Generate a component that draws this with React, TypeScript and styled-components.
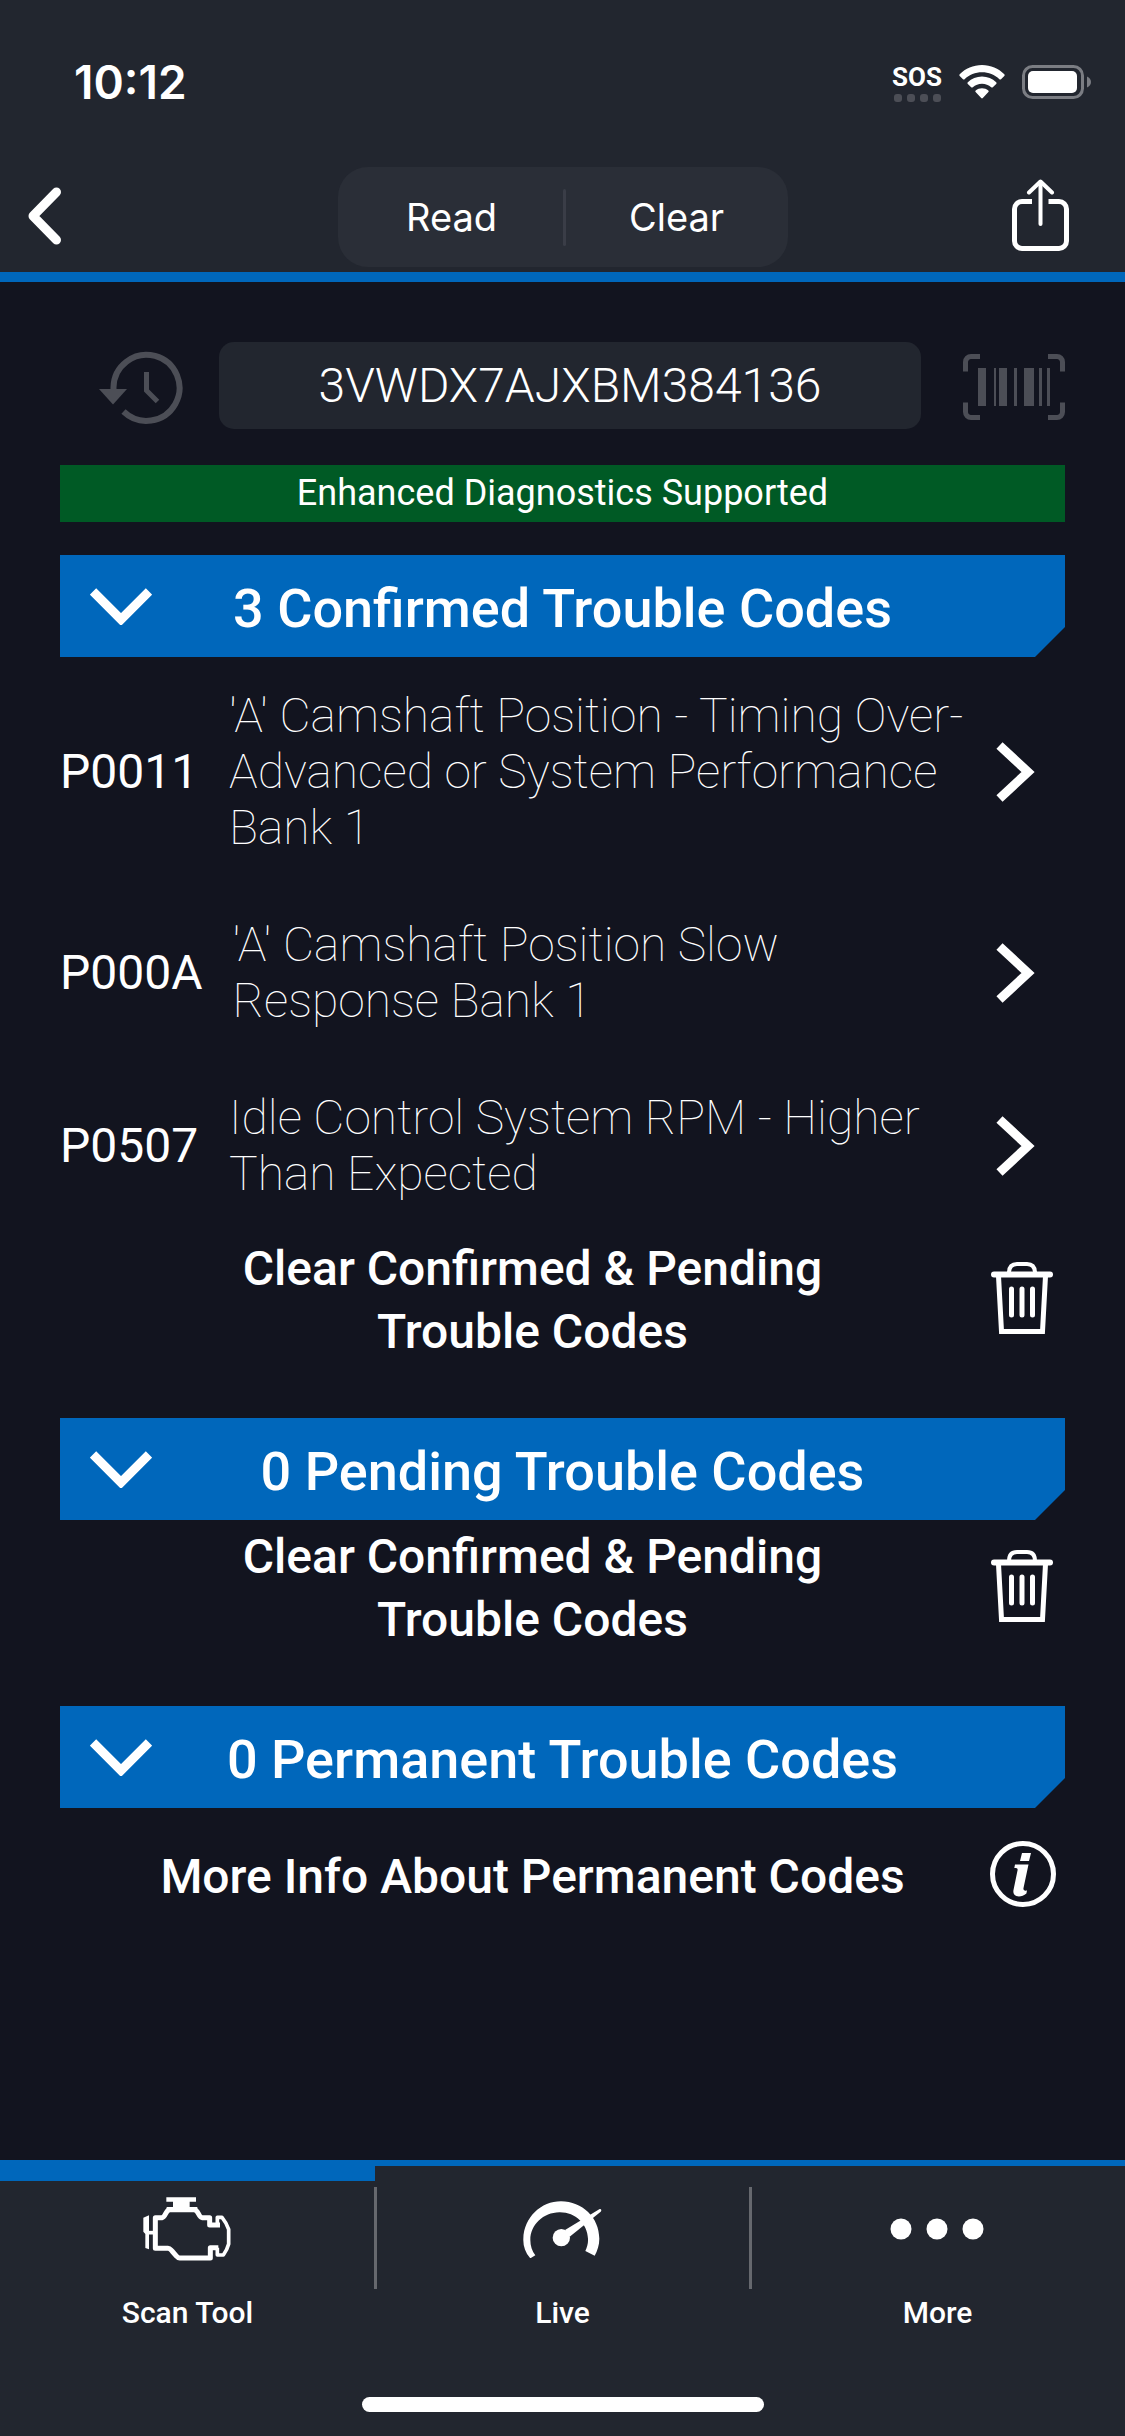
import React, { useState } from "react";
import styled, { createGlobalStyle } from "styled-components";

const color = {
  page: "#12141f",
  bar: "#22262f",
  raised: "#2a2e37",
  blue: "#0067bb",
  green: "#005a25",
  muted: "#4c4e56",
  divider: "#66686e",
};

const GlobalStyle = createGlobalStyle`
  *, *::before, *::after { box-sizing: border-box; }
  body {
    margin: 0;
    background: ${color.page};
    color: #fff;
    font-family: Roboto, "Liberation Sans", sans-serif;
  }
  button, input {
    font: inherit;
    color: inherit;
    border: 0;
    margin: 0;
    padding: 0;
    background: none;
  }
  button { cursor: pointer; }
  a { color: inherit; text-decoration: none; }
  svg { display: block; flex: none; }
  h2, p, ul { margin: 0; padding: 0; list-style: none; }
`;

const Screen = styled.div`
  min-height: 100vh;
  display: flex;
  flex-direction: column;
`;

const TopBar = styled.header`
  background: ${color.bar};
  border-bottom: 10px solid ${color.blue};
`;

const StatusBar = styled.div`
  display: flex;
  justify-content: space-between;
  align-items: center;
  height: 162px;
  padding: 2px 34px 0 74px;
`;

const Time = styled.span`
  font: 600 46px/60px Inter, "Liberation Sans", sans-serif;
`;

const StatusIcons = styled.div`
  display: flex;
  align-items: center;
  gap: 17px;
`;

const Carrier = styled.div`
  display: grid;
  justify-items: center;
  gap: 3px;
  font: 700 26px/28px Roboto, "Liberation Sans", sans-serif;
`;

const Dots = styled.div`
  display: flex;
  gap: 5px;
`;

const Dot = styled.i`
  width: 8px;
  height: 8px;
  border-radius: 3px;
  background: ${color.muted};
`;

const NavBar = styled.nav`
  display: grid;
  grid-template-columns: 1fr auto 1fr;
  align-items: center;
  height: 110px;
`;

const BackButton = styled.button`
  justify-self: start;
  padding-left: 28px;
`;

const ShareButton = styled.button`
  justify-self: end;
  padding-right: 56px;
`;

const Segments = styled.div`
  display: flex;
  align-items: center;
  height: 100px;
  padding-left: 3px;
  border-radius: 30px;
  background: ${color.raised};
`;

const Segment = styled.button`
  width: 222px;
  height: 100px;
  font: 400 38px/48px Inter, "Liberation Sans", sans-serif;
`;

const SegmentDivider = styled.span`
  width: 3px;
  height: 57px;
  border-radius: 2px;
  background: #3a3d47;
`;

const Content = styled.main`
  flex: 1;
  padding: 60px 60px 0;
`;

const VinRow = styled.div`
  display: flex;
  align-items: center;
  gap: 36px;
`;

const HistoryButton = styled.button`
  padding-left: 39px;
`;

const ScanButton = styled.button`
  padding: 2px 0 0 6px;
`;

const VinInput = styled.input`
  flex: 1;
  min-width: 0;
  height: 87px;
  border-radius: 15px;
  background: ${color.bar};
  font-size: 48px;
  font-weight: 300;
  text-align: center;
`;

const Supported = styled.p`
  margin: 36px 0 33px;
  background: ${color.green};
  font-size: 36px;
  line-height: 57px;
  text-align: center;
`;

const Section = styled.section`
  & + & { margin-top: 54px; }
`;

const SectionToggle = styled.button`
  display: grid;
  grid-template-columns: 122px 1fr 122px;
  align-items: center;
  justify-items: center;
  width: 100%;
  height: 102px;
  background: ${color.blue};
  clip-path: polygon(0 0, 100% 0, 100% 72px, calc(100% - 30px) 100%, 0 100%);
`;

const SectionTitle = styled.span`
  padding-top: 4px;
  font-size: 54px;
  font-weight: 500;
  line-height: 63px;
`;

const CodeRow = styled.a`
  display: flex;
  align-items: center;
  gap: 30px;
  padding: 31px 30px 30px 0;
  font-size: 48px;
  line-height: 56px;
`;

const Code = styled.span`
  min-width: 139px;
`;

const Description = styled.span`
  flex: 1;
  font-weight: 100;
`;

const ActionRow = styled.button`
  display: grid;
  grid-template-columns: 1fr 84px;
  align-items: center;
  justify-items: center;
  width: 100%;
  min-height: 132px;
  padding-left: 24px;
`;

const ActionLabel = styled.span`
  padding-top: 4px;
  font-size: 48px;
  font-weight: 500;
  line-height: 63px;
`;

const TabBar = styled.footer`
  border-top: 6px solid ${color.blue};
  background: ${color.bar};
`;

const Tabs = styled.nav`
  display: grid;
  grid-template-columns: repeat(3, 1fr);
`;

const Tab = styled.a<{ $active?: boolean }>`
  display: flex;
  flex-direction: column;
  align-items: center;
  border-top: 15px solid ${(p) => (p.$active ? color.blue : "transparent")};
  font-size: 30px;
  font-weight: 500;
  line-height: 36px;
`;

const TabIcon = styled.span<{ $divided?: boolean }>`
  display: grid;
  place-items: center;
  align-self: stretch;
  height: 102px;
  margin: 6px -2px 6px 0;
  padding-bottom: 18px;
  border-right: 3px solid ${(p) => (p.$divided ? color.divider : "transparent")};
`;

const HomeIndicator = styled.div`
  width: 402px;
  height: 15px;
  margin: 66px auto 24px;
  border-radius: 8px;
  background: #fff;
`;

const WifiIcon = () => (
  <svg width="46" height="34" viewBox="0 0 46 34" fill="#fff" aria-hidden="true">
    <path d="M23 0C31.800 0 39.500 3.500 45.300 9.200c.5.500.5 1.200 0 1.700L42 14.200c-.4.500-1.100.5-1.600 0C35.700 9.800 29.700 7.300 23 7.300S10.300 9.800 5.600 14.200c-.5.500-1.200.5-1.600 0L.7 10.900c-.5-.5-.5-1.200 0-1.700C6.500 3.500 14.200 0 23 0z" />
    <path d="M23 11.600c5.500 0 10.400 2.100 14.200 5.600.5.500.5 1.200 0 1.700l-3.400 3.400c-.4.400-1.100.4-1.600 0-2.500-2.200-5.700-3.500-9.200-3.500s-6.700 1.300-9.200 3.500c-.5.400-1.200.4-1.600 0l-3.400-3.400c-.5-.5-.5-1.200 0-1.700 3.800-3.500 8.700-5.600 14.200-5.600z" />
    <path d="M23 23.200c2.400 0 4.600.8 6.300 2.200.5.500.5 1.200.1 1.700l-5.600 5.900c-.5.500-1.100.5-1.600 0l-5.600-5.900c-.4-.5-.4-1.200.1-1.700 1.700-1.400 3.900-2.200 6.300-2.200z" />
  </svg>
);

const BatteryIcon = () => (
  <svg width="69" height="34" viewBox="0 0 69 34" aria-hidden="true">
    <rect x="1.500" y="1.500" width="59" height="31" rx="9" fill="none" stroke="#7b7d83" strokeWidth="3" />
    <rect x="6" y="6" width="49" height="22" rx="5" fill="#fff" />
    <path d="M65 11.500c2.500 1 4 3 4 5.500s-1.500 4.500-4 5.500z" fill="#7b7d83" />
  </svg>
);

const BackIcon = () => (
  <svg width="34" height="60" viewBox="0 0 34 60" aria-hidden="true">
    <path d="M28.500 5 5 29l23.500 24" fill="none" stroke="#fff" strokeWidth="9" strokeLinecap="round" strokeLinejoin="round" />
  </svg>
);

const ShareIcon = () => (
  <svg width="57" height="76" viewBox="0 0 57 76" fill="none" stroke="#fff" strokeLinecap="round" strokeLinejoin="round" aria-hidden="true">
    <path strokeWidth="5" strokeLinecap="butt" d="M20 22.500H10A7.500 7.500 0 0 0 2.500 30v32a7.500 7.500 0 0 0 7.500 7.500h37a7.500 7.500 0 0 0 7.500-7.500V30a7.500 7.500 0 0 0-7.500-7.500H36.500" />
    <path strokeWidth="4" d="M28.500 3v42" />
    <path strokeWidth="4" d="M17 13.500 28.500 2.500 40 13.500" />
  </svg>
);

const HistoryIcon = () => (
  <svg width="84" height="78" viewBox="0 0 84 78" aria-hidden="true">
    <path d="M14.500 43V40.500A33 33 0 1 1 24.500 64.500" fill="none" stroke={color.muted} strokeWidth="6" />
    <path d="M0 42h28L14 57.500z" fill={color.muted} />
    <path d="M47.500 25v18.500l11 11" fill="none" stroke={color.muted} strokeWidth="5" />
  </svg>
);

const BarcodeIcon = () => (
  <svg width="102" height="66" viewBox="0 0 102 66" aria-hidden="true">
    <path
      d="M17 2.500H8A5.500 5.500 0 0 0 2.500 8v9.500M85 2.500h9A5.500 5.500 0 0 1 99.500 8v9.500M99.500 48.500V58a5.500 5.500 0 0 1-5.500 5.500h-9M17 63.500H8A5.500 5.500 0 0 1 2.500 58v-9.500"
      fill="none"
      stroke={color.muted}
      strokeWidth="5"
    />
    <path
      d="M15 14h8v38h-8zM31 14h2v38h-2zM36 14h8v38h-8zM51 14h3v38h-3zM61 14h10v38H61zM76 14h3v38h-3zM84 14h3v38h-3z"
      fill={color.muted}
    />
  </svg>
);

const DownIcon = () => (
  <svg width="62" height="37" viewBox="0 0 62 37" aria-hidden="true">
    <path d="M3 3.500 31 31.500 59 3.500" fill="none" stroke="#fff" strokeWidth="9" />
  </svg>
);

const RightIcon = () => (
  <svg width="39" height="60" viewBox="0 0 39 60" aria-hidden="true">
    <path d="M3.500 3.500 32 30 3.500 56.500" fill="none" stroke="#fff" strokeWidth="9" />
  </svg>
);

const TrashIcon = () => (
  <svg width="65" height="72" viewBox="0 0 65 72" fill="none" stroke="#fff" strokeLinecap="round" aria-hidden="true">
    <path strokeWidth="6" d="M3 12.500h56" />
    <path strokeWidth="4" d="M18 11c0-6 3-9 8-9h10c5 0 8 3 8 9" />
    <path strokeWidth="5" strokeLinecap="butt" d="M7.500 14 10.500 69.500h41l3-55.500" />
    <path strokeWidth="5" d="M20.500 27v26M31 27v26M41.500 27v26" />
  </svg>
);

const InfoIcon = () => (
  <svg width="66" height="66" viewBox="0 0 66 66" aria-hidden="true">
    <circle cx="33" cy="33" r="30.500" fill="none" stroke="#fff" strokeWidth="5" />
    <path d="M32 12h9l-2 8h-9z" fill="#fff" />
    <path d="M25 23.500h13.500L33.500 47c-.4 2 .5 3 3.500 2.500l-.6 3c-3 2.500-7 3.500-10 2.500-2.800-.9-3.500-3.500-2.800-6.500L27.500 29.500c.5-2-.5-2.500-3.200-2.500z" fill="#fff" />
  </svg>
);

const EngineIcon = () => (
  <svg width="88" height="64" viewBox="23 26 264 192" fill="none" stroke="#fff" strokeLinejoin="round" aria-hidden="true">
    <path fill="#fff" stroke="none" d="M93 27h89v13h-19v20h-50V40H93zM94 56h92v16H94zM24 88l17-7v102l-11-4v-42l-6-7z" />
    <path strokeWidth="11" d="M36 133h24" />
    <path
      strokeWidth="15"
      d="M102 64c-11 2-11 22-22 24H60v92h38c6 0 8 4 12 8l14 16c3 4 5 5 9 5h92v-31h24"
    />
    <path strokeWidth="15" d="M178 64c11 2 12 22 22 24h23v22h31" />
    <path strokeWidth="11" d="M246 112V87h14c10 12 15 22 20 36v44c-3 12-9 23-16 33h-18v-22" />
  </svg>
);

const GaugeIcon = () => (
  <svg width="79" height="57" viewBox="1163 35 237 171" fill="#fff" aria-hidden="true">
    <path d="M1185 207C1170 190 1163 170 1164 148C1166 84 1217 36 1277 36C1341 36 1392 85 1392 148C1392 167 1386 184 1378 199L1350 185C1355 174 1359 162 1358 148C1356 104 1320 68 1272 69C1224 70 1185 106 1185 152C1185 170 1190 185 1200 198z" />
    <path d="M1289 122 1393 59C1397 58 1400 63 1396 67L1303 142z" />
    <circle cx="1278" cy="145" r="26" />
  </svg>
);

const MoreIcon = () => (
  <svg width="94" height="22" viewBox="0 0 94 22" fill="#fff" aria-hidden="true">
    <circle cx="11" cy="11" r="10.500" />
    <circle cx="47" cy="11" r="10.500" />
    <circle cx="83" cy="11" r="10.500" />
  </svg>
);

const confirmed = [
  { code: "P0011", text: "'A' Camshaft Position - Timing Over-Advanced or System Performance Bank 1" },
  { code: "P000A", text: "'A' Camshaft Position Slow Response Bank 1" },
  { code: "P0507", text: "Idle Control System RPM - Higher Than Expected" },
];

const CodeSection = ({ title, children }: { title: string; children: React.ReactNode }) => {
  const [open, setOpen] = useState(true);
  return (
    <Section>
      <h2>
        <SectionToggle type="button" aria-expanded={open} onClick={() => setOpen(!open)}>
          <DownIcon />
          <SectionTitle>{title}</SectionTitle>
        </SectionToggle>
      </h2>
      {open && children}
    </Section>
  );
};

const ClearAction = () => (
  <ActionRow type="button">
    <ActionLabel>
      Clear Confirmed &amp; Pending
      <br />
      Trouble Codes
    </ActionLabel>
    <TrashIcon />
  </ActionRow>
);

export default function App() {
  const [vin, setVin] = useState("3VWDX7AJXBM384136");

  return (
    <>
      <GlobalStyle />
      <Screen>
        <TopBar>
          <StatusBar>
            <Time>10:12</Time>
            <StatusIcons>
              <Carrier>
                SOS
                <Dots>
                  <Dot />
                  <Dot />
                  <Dot />
                  <Dot />
                </Dots>
              </Carrier>
              <WifiIcon />
              <BatteryIcon />
            </StatusIcons>
          </StatusBar>
          <NavBar>
            <BackButton type="button" aria-label="Back">
              <BackIcon />
            </BackButton>
            <Segments>
              <Segment type="button">Read</Segment>
              <SegmentDivider />
              <Segment type="button">Clear</Segment>
            </Segments>
            <ShareButton type="button" aria-label="Share">
              <ShareIcon />
            </ShareButton>
          </NavBar>
        </TopBar>

        <Content>
          <VinRow>
            <HistoryButton type="button" aria-label="VIN history">
              <HistoryIcon />
            </HistoryButton>
            <VinInput aria-label="VIN" value={vin} onChange={(e) => setVin(e.target.value)} />
            <ScanButton type="button" aria-label="Scan VIN barcode">
              <BarcodeIcon />
            </ScanButton>
          </VinRow>
          <Supported>Enhanced Diagnostics Supported</Supported>

          <CodeSection title="3 Confirmed Trouble Codes">
            <ul>
              {confirmed.map((item) => (
                <li key={item.code}>
                  <CodeRow href={`#${item.code}`}>
                    <Code>{item.code}</Code>
                    <Description>{item.text}</Description>
                    <RightIcon />
                  </CodeRow>
                </li>
              ))}
            </ul>
            <ClearAction />
          </CodeSection>

          <CodeSection title="0 Pending Trouble Codes">
            <ClearAction />
          </CodeSection>

          <CodeSection title="0 Permanent Trouble Codes">
            <ActionRow type="button">
              <ActionLabel>More Info About Permanent Codes</ActionLabel>
              <InfoIcon />
            </ActionRow>
          </CodeSection>
        </Content>

        <TabBar>
          <Tabs>
            <Tab href="#scan" $active>
              <TabIcon $divided>
                <EngineIcon />
              </TabIcon>
              Scan Tool
            </Tab>
            <Tab href="#live">
              <TabIcon $divided>
                <GaugeIcon />
              </TabIcon>
              Live
            </Tab>
            <Tab href="#more">
              <TabIcon>
                <MoreIcon />
              </TabIcon>
              More
            </Tab>
          </Tabs>
          <HomeIndicator />
        </TabBar>
      </Screen>
    </>
  );
}
